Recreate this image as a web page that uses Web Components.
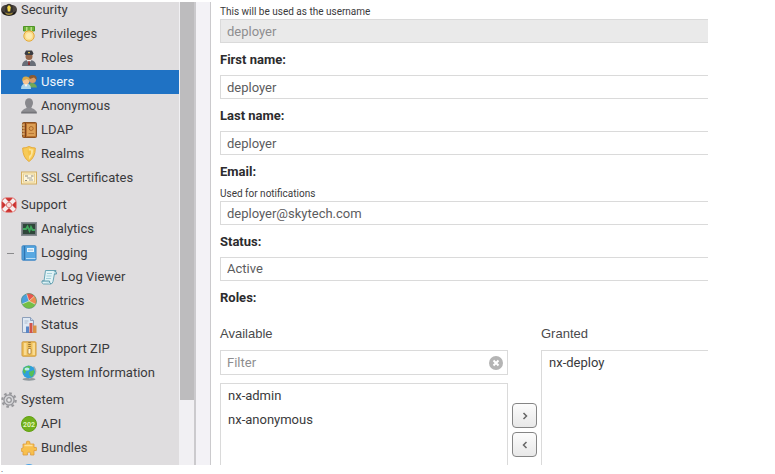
<!DOCTYPE html>
<html lang="en">
<head>
<meta charset="utf-8">
<title>Users</title>
<style>
  * { box-sizing: border-box; }
  body {
    margin: 0;
    height: 100vh;
    padding: 2px 67px 0 1px;
    display: grid;
    grid-template-rows: minmax(0, 1fr) 9px;
    background: #fff;
    color: #3a3a3c;
    font: 13px/16px Roboto, "Liberation Sans", sans-serif;
  }
  .end { margin: 0; font: 8px/9px "Liberation Serif", serif; color: #201030; }
</style>
</head>
<body>
<admin-shell>
  <nav-tree slot="nav">
    <nav-group>
      <nav-item icon="security">Security</nav-item>
      <nav-item icon="privileges" level="1">Privileges</nav-item>
      <nav-item icon="roles" level="1">Roles</nav-item>
      <nav-item icon="users" level="1" selected>Users</nav-item>
      <nav-item icon="anonymous" level="1">Anonymous</nav-item>
      <nav-item icon="ldap" level="1">LDAP</nav-item>
      <nav-item icon="realms" level="1">Realms</nav-item>
      <nav-item icon="ssl" level="1">SSL Certificates</nav-item>
    </nav-group>
    <nav-group>
      <nav-item icon="support">Support</nav-item>
      <nav-item icon="analytics" level="1">Analytics</nav-item>
      <nav-item icon="logging" level="1" open>Logging</nav-item>
      <nav-item icon="logviewer" level="2">Log Viewer</nav-item>
      <nav-item icon="metrics" level="1">Metrics</nav-item>
      <nav-item icon="status" level="1">Status</nav-item>
      <nav-item icon="zip" level="1">Support ZIP</nav-item>
      <nav-item icon="sysinfo" level="1">System Information</nav-item>
    </nav-group>
    <nav-group>
      <nav-item icon="system">System</nav-item>
      <nav-item icon="api" level="1">API</nav-item>
      <nav-item icon="bundles" level="1">Bundles</nav-item>
      <nav-item icon="capabilities" level="1"></nav-item>
    </nav-group>
  </nav-tree>
  <user-form>
    <form-field hint="This will be used as the username" value="deployer" disabled></form-field>
    <form-field label="First name:" value="deployer"></form-field>
    <form-field label="Last name:" value="deployer"></form-field>
    <form-field label="Email:" hint="Used for notifications" type="email" value="deployer@skytech.com"></form-field>
    <form-field label="Status:" type="select" value="Active"></form-field>
    <role-picker label="Roles:" available="nx-admin,nx-anonymous" granted="nx-deploy"></role-picker>
  </user-form>
</admin-shell>
<p class="end">.</p>

<script>
const ICONS = {
  security: `<path d="M0 8q0-4 4-5h8q4 1 4 5 0 5-8 6-8-1-8-6z" fill="#4a4440"/><path d="M1 9q7 6 14 0l-1 3q-6 3-12 0z" fill="#1b1816"/><path d="M4.500 3.500Q8 0 11.500 3.500l.5 6.500q-4 2-8 0z" fill="#35312c"/><path d="M4.500 10.500q3.500 2 7 0v1.500q-3.500 2-7 0z" fill="#a08a3a"/><path d="M8 3l1.800 2-.6 4.500H6.800L6.200 5z" fill="#f3d648"/>`,
  privileges: `<path d="M2.500.5h11V5h-11z" fill="#6db33a" stroke="#4f9426"/><path d="M5 1h1.500v4H5zM9.500 1H11v4H9.500z" fill="#b9dd86"/><path d="M4 5h8v3H4z" fill="#f0bf55"/><circle cx="8" cy="10" r="5.200" fill="#fbdd8b" stroke="#e3a839"/><circle cx="8" cy="10" r="3" fill="#fdeab1"/>`,
  roles: `<path d="M1 16q0-5 5-6h4q5 1 5 6z" fill="#686e78"/><path d="M5.500 10L8 13l2.500-3z" fill="#f0eeee"/><path d="M7.300 11h1.400L9 15H7z" fill="#8a2c2c"/><circle cx="8" cy="6.500" r="3.500" fill="#96664a"/><path d="M3.500 3.500L5 .5h6l1.500 3-1 1.500h-7z" fill="#3a3c42"/><path d="M7 2h2v1.200H7z" fill="#d4ba4a"/>`,
  users: `<path d="M7 13.500Q7 9 11 9t5 4.500z" fill="#71a957"/><circle cx="11.500" cy="5.500" r="3.500" fill="#d99d6b"/><path d="M7.500 5.500Q7.500.5 12 1t3.500 5L13 3.500z" fill="#8a5a32"/><path d="M0 15q0-5.500 5-5.500t5 5.500z" fill="#a9d3ea"/><path d="M3.500 10L5 13l1.500-3z" fill="#fff"/><circle cx="5" cy="7" r="3.400" fill="#f5c594"/><path d="M1.300 7q-.5-5 4-4.500t3.400 4.500L6 5z" fill="#d9aa4a"/>`,
  anonymous: `<path d="M0 15.500Q0 12 5.500 10V8h5v2Q16 12 16 15.500z" fill="#8e8e93"/><ellipse cx="8" cy="5" rx="4" ry="4.800" fill="#88888d"/><path d="M.5 14.500h15" stroke="#75757a" stroke-width="1.500"/>`,
  ldap: `<rect x="1.500" y=".5" width="14" height="15" rx="1" fill="#b8702f" stroke="#8a5121"/><path d="M4.500 1v14" stroke="#7c421a"/><path d="M0 3h3.500M0 6h3.500M0 9h3.500M0 12h3.500" stroke="#e6cf9d"/><rect x="6" y="2" width="8.500" height="12" fill="#dc9f55"/><circle cx="10.200" cy="6.500" r="2" fill="none" stroke="#ad6829"/><path d="M7.500 11.500h5.500" stroke="#b97735"/>`,
  realms: `<path d="M8 .5q3 1.500 6.300 1.500 0 9.500-6.300 13.500Q1.700 11.500 1.700 2 5 2 8 .5z" fill="#f7ca57" stroke="#e6ab3a"/><path d="M8 2.500q2 1 4.300 1-.2 6-4.300 10z" fill="#fce49a"/><path d="M6.500 4.500h3.500v3.500L8 10z" fill="#f4c146"/>`,
  ssl: `<rect x=".5" y="2" width="15" height="12" fill="#fbeec6" stroke="#d3ad61"/><rect x="2.500" y="4" width="11" height="8" fill="#fdf6df" stroke="#ead192"/><path d="M4 6h3M10 6h2.500M4 10.500h2" stroke="#8d8a80"/><path d="M6 8h5M8 10h4" stroke="#a7a69c"/>`,
  support: `<rect x=".5" y=".5" width="15" height="15" rx="5" fill="#dd4540"/><path d="M1 4l3-3 4 4 4-4 3 3-4 4 4 4-3 3-4-4-4 4-3-3 4-4z" fill="#f4eeee"/><path d="M5 1.500h6L8 4.500zM5 14.500h6l-3-3zM1.500 5v6l3-3zM14.500 5v6l-3-3z" fill="#c73330"/><circle cx="8" cy="8" r="2.700" fill="#f9dad8" stroke="#d46b66" stroke-width=".8"/>`,
  analytics: `<rect x=".5" y="1.500" width="15" height="13" fill="#70777c" stroke="#868c90"/><rect x="2" y="3" width="12" height="10" fill="#2e4639"/><path d="M2 8h3l1.500-2.500 2 4.500L10 6l1.500 3H14" fill="none" stroke="#3fa65c" stroke-width="1.800"/>`,
  logging: `<rect x="1" y=".8" width="14" height="14.400" rx="1" fill="#57a8e2" stroke="#3d85c2"/><path d="M3.500 1v14" stroke="#2f74b1" stroke-width="1.500"/><rect x="6" y="3" width="7" height="4" fill="#e8f3fb"/><path d="M7 5h5" stroke="#8cb4d3"/><path d="M5 13.500h9.500" stroke="#b9dcf4"/>`,
  logviewer: `<path d="M4.500 1.500H15q-1.500 1-1.500 3L12 12.500q-.5 2.500-2.500 2.500H2.500q-2.500-1-1.500-3h2z" fill="#e2f3f6" stroke="#6aa5b5"/><path d="M12.500 1.500q3.500.5 3 3.500h-2.500M1 12h7.500q0 2.500 1.500 3" fill="#c4e4ec" stroke="#5c98aa"/><path d="M6 4.500h5M5.500 7h5M5 9.500h5" stroke="#a2ced9"/>`,
  metrics: `<circle cx="8" cy="8" r="7.600" fill="#74bf45"/><path d="M8 8L1 11Q-2 3.500 5.500.7z" fill="#4b9fdd"/><path d="M8 8L5.500.7Q10-.7 13.500 3z" fill="#e9584f"/><path d="M8 8l5.500-5Q16.500 7 14.800 11.500z" fill="#ef8b50"/><path d="M8 8L1 11M8 8L5.500.7M8 8l5.500-5M8 8l6.800 3.500" stroke="#f4f4ee" stroke-width=".6"/><circle cx="8" cy="8" r="7.500" fill="none" stroke="#56917a" stroke-width=".6"/>`,
  status: `<path d="M1.500.5h8l3 3v12h-11z" fill="#dfe8f3" stroke="#8d9fba"/><path d="M9.500.5v3h3" fill="#c5d5e9" stroke="#8d9fba"/><path d="M3.500 4h4M3.500 6h3" stroke="#aebccf"/><path d="M5 9.500h3V16H5z" fill="#5a86c6"/><path d="M8.500 6h3v10h-3z" fill="#d2544a"/><path d="M12 8.500h3.500V16H12z" fill="#d99045"/>`,
  zip: `<rect x="1" y=".8" width="14" height="14.400" rx="1" fill="#efc05b" stroke="#cf9a3c"/><path d="M3 2h2.500v12H3zM11.500 2H14v12h-2.500z" fill="#f9db92"/><path d="M8.500 1v7" stroke="#9a7638" stroke-width="2.500" stroke-dasharray="1 1"/><rect x="7" y="7.500" width="3" height="5.500" rx="1" fill="#fff6dd" stroke="#a87b35" stroke-width=".8"/>`,
  sysinfo: `<ellipse cx="8" cy="14.300" rx="6.500" ry="1.500" fill="#8e979c"/><path d="M12.500 1.500q4.500 5.500-.5 10L8 13.500" fill="none" stroke="#a6abb0" stroke-width="1.500"/><circle cx="7.700" cy="6.800" r="6.400" fill="#2fa0dc"/><path d="M2.500 3.500Q6-.5 9.500 1.200L8 5 5 6 4 9Q1 7 2.500 3.500zM8 7l5-2q1 4-2.500 7L8.500 10z" fill="#56bf55"/><ellipse cx="6" cy="4" rx="2.500" ry="1.500" fill="#b9ecec"/>`,
  system: `<circle cx="8" cy="8" r="6.700" fill="none" stroke="#97979b" stroke-width="2.200" stroke-dasharray="2.600 2.660"/><circle cx="8" cy="8" r="5.100" fill="#d6d6d9" stroke="#919196" stroke-width="1.200"/><circle cx="8" cy="8" r="2.300" fill="#e6e6e8" stroke="#98989c" stroke-width="1.300"/>`,
  api: `<circle cx="8" cy="8" r="7.500" fill="#72b01c" stroke="#62a012"/><text x="8" y="10.500" text-anchor="middle" font-family="Roboto, sans-serif" font-size="7" font-weight="700" fill="#e0f3b8">202</text>`,
  bundles: `<path d="M2 4h3.500Q4.500 1 7 1t2 3H13v3.500q3-1 3 1.500t-3 1.500V15H9.500q1-3-1.500-3t-1.500 3H2v-3.500q-2 .5-2-1.500t2-2z" fill="#f8c04e" stroke="#dc9c3c" stroke-width=".8"/><path d="M3.500 5.500h8" stroke="#ffe09a" stroke-width="1.500"/>`,
  capabilities: `<circle cx="8" cy="7" r="7" fill="#4ba3e6"/>`,
};

class AdminShell extends HTMLElement {
  constructor() {
    super();
    this.attachShadow({ mode: 'open' }).innerHTML = `
      <style>
        :host {
          display: grid;
          grid-template-columns: 193px 17px minmax(0, 1fr);
          grid-template-rows: 100%;
          overflow: hidden;
        }
        .splitter {
          background: #f3f2f6;
          border: solid #cbcacd;
          border-width: 0 1px 0 2px;
        }
        main { overflow: hidden; padding-left: 9px; }
        ::slotted([slot="nav"]) { min-height: 0; }
      </style>
      <slot name="nav"></slot>
      <div class="splitter"></div>
      <main><slot></slot></main>
    `;
  }
}

class NavTree extends HTMLElement {
  constructor() {
    super();
    this.attachShadow({ mode: 'open' }).innerHTML = `
      <style>
        :host {
          display: grid;
          grid-template-columns: minmax(0, 1fr) 15px;
          grid-template-rows: 100%;
          overflow: hidden;
          background: #dfdddf;
        }
        nav {
          display: flex;
          flex-direction: column;
          gap: 3px;
          margin-top: -4px;
        }
        .track { background: #f1f0f3; padding-left: 1px; }
        .thumb { height: 86%; background: #bdbcbe; }
      </style>
      <nav aria-label="Administration"><slot></slot></nav>
      <div class="track"><div class="thumb"></div></div>
    `;
  }
}

class NavGroup extends HTMLElement {
  constructor() {
    super();
    this.attachShadow({ mode: 'open' }).innerHTML = `
      <style>
        :host { display: block; }
      </style>
      <slot></slot>
    `;
  }
}

class NavItem extends HTMLElement {
  connectedCallback() {
    const level = Number(this.getAttribute('level') || 0);
    this.attachShadow({ mode: 'open' }).innerHTML = `
      <style>
        :host { display: block; color: #3a3a3c; }
        :host([selected]) { background: #1f72c4; color: #f0f6fc; }
        a {
          display: flex;
          align-items: center;
          gap: 4px;
          height: 24px;
          padding-left: ${level * 20}px;
          color: inherit;
          text-decoration: none;
          white-space: nowrap;
        }
        :host([open]) a { padding-left: 6px; }
        .toggle { width: 7px; height: 1px; margin-right: 3px; background: #8a8a8c; }
        svg { flex: none; width: 16px; height: 16px; }
      </style>
      <a href="#${this.getAttribute('icon')}">
        ${this.hasAttribute('open') ? '<span class="toggle"></span>' : ''}
        <svg viewBox="0 0 16 16" aria-hidden="true">${ICONS[this.getAttribute('icon')]}</svg>
        <span><slot></slot></span>
      </a>
    `;
  }
}

class UserForm extends HTMLElement {
  constructor() {
    super();
    this.attachShadow({ mode: 'open' }).innerHTML = `
      <style>
        :host { display: block; min-width: 609px; padding-top: 3px; }
      </style>
      <slot></slot>
    `;
  }
}

class FormField extends HTMLElement {
  connectedCallback() {
    const label = this.getAttribute('label');
    const hint = this.getAttribute('hint');
    const value = this.getAttribute('value');
    const type = this.getAttribute('type') || 'text';
    const control = type === 'select'
      ? `<select id="control"><option>${value}</option></select>`
      : `<input id="control" type="${type}" value="${value}" ${this.hasAttribute('disabled') ? 'disabled' : ''}>`;

    this.attachShadow({ mode: 'open' }).innerHTML = `
      <style>
        :host { display: block; }
        label { display: block; }
        .label { padding: 9px 0 7px; font-weight: 700; color: #2c2c2e; }
        .hint { font-size: 10px; line-height: 14px; }
        input, select {
          display: block;
          box-sizing: border-box;
          width: 100%;
          height: 24px;
          margin: 0;
          padding: 0 6px;
          border: 1px solid #dadada;
          border-radius: 0;
          background: #fff;
          color: #5c5c5e;
          font: inherit;
          appearance: none;
        }
        input:disabled { background: #eaeaea; color: #8e8e90; }
      </style>
      ${label ? `<label class="label" for="control">${label}</label>` : ''}
      ${hint ? `<label class="hint" for="control">${hint}</label>` : ''}
      ${control}
    `;
  }
}

class RolePicker extends HTMLElement {
  connectedCallback() {
    const items = (name) => this.getAttribute(name).split(',')
      .map((role) => `<li role="option">${role}</li>`).join('');

    this.attachShadow({ mode: 'open' }).innerHTML = `
      <style>
        :host { display: block; }
        h2 { margin: 0; padding: 9px 0 20px; font-size: 13px; line-height: 16px; color: #2c2c2e; }
        .columns {
          display: grid;
          grid-template-columns: 1fr 25px 1fr;
          gap: 4px;
          height: 300px;
        }
        .column { display: flex; flex-direction: column; }
        .title { padding-bottom: 8px; font-family: "Liberation Sans", sans-serif; color: #4a4a4c; }
        .filter {
          display: flex;
          align-items: center;
          box-sizing: border-box;
          height: 25px;
          margin-bottom: 8px;
          padding: 0 3px 0 6px;
          border: 1px solid #dadada;
        }
        input { flex: 1; min-width: 0; padding: 0; border: 0; outline: 0; font: inherit; }
        input::placeholder { color: #8e8e90; }
        .clear { display: flex; padding: 0; border: 0; background: none; }
        ul {
          flex: 1;
          margin: 0;
          padding: 0 7px;
          border: 1px solid #dadada;
          list-style: none;
        }
        li { line-height: 24px; }
        .moves { display: flex; flex-direction: column; gap: 4px; padding-top: 77px; }
        .moves button {
          display: grid;
          place-items: center;
          height: 25px;
          padding: 0;
          border: 1px solid #858585;
          border-radius: 4px;
          background: linear-gradient(#fcfcfc, #e8e8e8);
        }
      </style>
      <h2>${this.getAttribute('label')}</h2>
      <div class="columns">
        <div class="column">
          <label class="title" for="filter">Available</label>
          <div class="filter">
            <input id="filter" placeholder="Filter">
            <button class="clear" type="button" aria-label="Clear filter">
              <svg width="16" height="16" viewBox="0 0 16 16">
                <circle cx="8" cy="8" r="7" fill="#b4b4b4"/>
                <path d="M5.500 5.500l5 5M10.500 5.500l-5 5" stroke="#fff" stroke-width="2"/>
              </svg>
            </button>
          </div>
          <ul role="listbox" aria-label="Available">${items('available')}</ul>
        </div>
        <div class="moves">
          <button type="button" aria-label="Grant">
            <svg width="8" height="8" viewBox="0 0 8 8"><path d="M2.500 1l3 3-3 3" fill="none" stroke="#666" stroke-width="1.500"/></svg>
          </button>
          <button type="button" aria-label="Revoke">
            <svg width="8" height="8" viewBox="0 0 8 8"><path d="M5.500 1l-3 3 3 3" fill="none" stroke="#666" stroke-width="1.500"/></svg>
          </button>
        </div>
        <div class="column">
          <div class="title" id="granted">Granted</div>
          <ul role="listbox" aria-labelledby="granted">${items('granted')}</ul>
        </div>
      </div>
    `;
  }
}

customElements.define('admin-shell', AdminShell);
customElements.define('nav-tree', NavTree);
customElements.define('nav-group', NavGroup);
customElements.define('nav-item', NavItem);
customElements.define('user-form', UserForm);
customElements.define('form-field', FormField);
customElements.define('role-picker', RolePicker);
</script>
</body>
</html>
